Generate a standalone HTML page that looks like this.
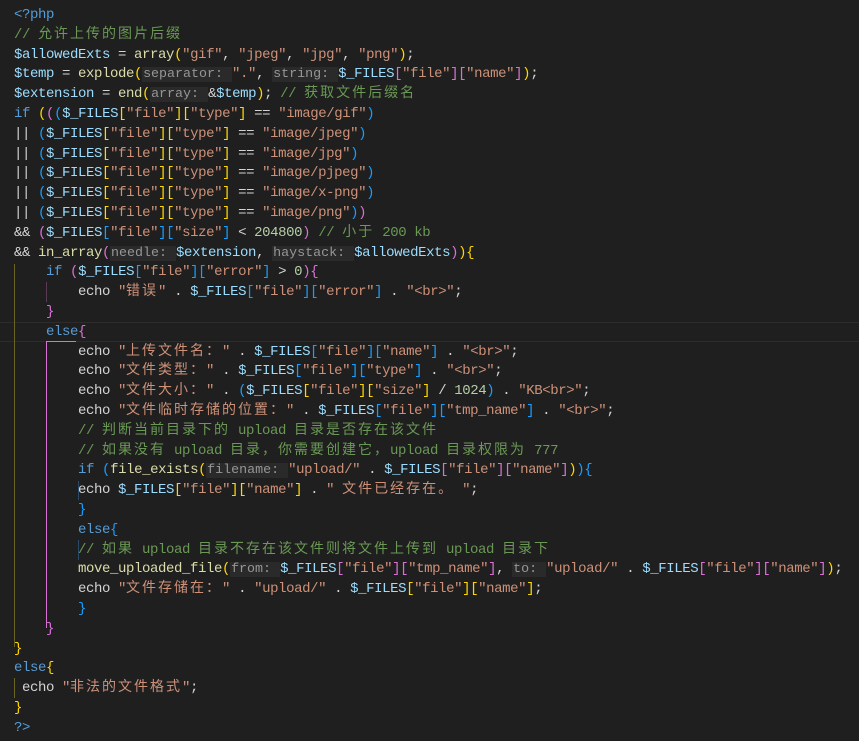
<!DOCTYPE html>
<html><head><meta charset="utf-8"><style>
body{margin:0;background:#1f1f1f;width:859px;height:741px;overflow:hidden;position:relative}
.l{position:absolute;left:14px;height:20px;line-height:20px;white-space:pre;font-family:"Liberation Mono","Noto Sans CJK SC",monospace;font-size:14px;letter-spacing:-0.4px;color:#d4d4d4}
.v{color:#9cdcfe}.k{color:#569cd6}.f{color:#dcdcaa}.s{color:#ce9178}.c{color:#6a9955}.n{color:#b5cea8}
.y{color:#ffd700}.p{color:#da70d6}.b{color:#179fff}
.h{color:#969696;background:#2a2a2a;padding:0 1px;line-height:1;font-size:13.33px;letter-spacing:0}
.z{font-family:"Noto Sans CJK SC",sans-serif;font-size:14px;letter-spacing:2px;line-height:1}
.g{position:absolute;width:1px}
</style></head><body>
<div style="position:absolute;left:0;top:322px;width:859px;height:18px;border-top:1px solid #2c2c2c;border-bottom:1px solid #2c2c2c"></div>
<div class="g" style="left:14px;top:264px;height:383px;background:#6b6420"></div>
<div class="g" style="left:14px;top:678px;height:20px;background:#6b6420"></div>
<div class="g" style="left:46px;top:282px;height:20px;background:#5a3a55"></div>
<div class="g" style="left:46px;top:341px;height:287px;background:#da70d6"></div>
<div style="position:absolute;left:46px;top:341px;width:30px;height:1px;background:#da70d6"></div>
<div class="g" style="left:78px;top:481px;height:19px;background:#2a4a6a"></div>
<div class="g" style="left:78px;top:540px;height:20px;background:#2a4a6a"></div>

<div class="l" style="top:5px"><span class="k">&lt;?php</span></div>
<div class="l" style="top:24.8px"><span class="c">// <span class="z">允许上传的图片后缀</span></span></div>
<div class="l" style="top:44.6px"><span class="v">$allowedExts</span> = <span class="f">array</span><span class="y">(</span><span class="s">"gif"</span>, <span class="s">"jpeg"</span>, <span class="s">"jpg"</span>, <span class="s">"png"</span><span class="y">)</span>;</div>
<div class="l" style="top:64.4px"><span class="v">$temp</span> = <span class="f">explode</span><span class="y">(</span><span class="h">separator: </span><span class="s">"."</span>, <span class="h">string: </span><span class="v">$_FILES</span><span class="p">[</span><span class="s">"file"</span><span class="p">][</span><span class="s">"name"</span><span class="p">]</span><span class="y">)</span>;</div>
<div class="l" style="top:84.2px"><span class="v">$extension</span> = <span class="f">end</span><span class="y">(</span><span class="h">array: </span>&amp;<span class="v">$temp</span><span class="y">)</span>; <span class="c">// <span class="z">获取文件后缀名</span></span></div>
<div class="l" style="top:104px"><span class="k">if</span> <span class="y">(</span><span class="p">(</span><span class="b">(</span><span class="v">$_FILES</span><span class="y">[</span><span class="s">"file"</span><span class="y">][</span><span class="s">"type"</span><span class="y">]</span> == <span class="s">"image/gif"</span><span class="b">)</span></div>
<div class="l" style="top:123.8px">|| <span class="b">(</span><span class="v">$_FILES</span><span class="y">[</span><span class="s">"file"</span><span class="y">][</span><span class="s">"type"</span><span class="y">]</span> == <span class="s">"image/jpeg"</span><span class="b">)</span></div>
<div class="l" style="top:143.6px">|| <span class="b">(</span><span class="v">$_FILES</span><span class="y">[</span><span class="s">"file"</span><span class="y">][</span><span class="s">"type"</span><span class="y">]</span> == <span class="s">"image/jpg"</span><span class="b">)</span></div>
<div class="l" style="top:163.4px">|| <span class="b">(</span><span class="v">$_FILES</span><span class="y">[</span><span class="s">"file"</span><span class="y">][</span><span class="s">"type"</span><span class="y">]</span> == <span class="s">"image/pjpeg"</span><span class="b">)</span></div>
<div class="l" style="top:183.2px">|| <span class="b">(</span><span class="v">$_FILES</span><span class="y">[</span><span class="s">"file"</span><span class="y">][</span><span class="s">"type"</span><span class="y">]</span> == <span class="s">"image/x-png"</span><span class="b">)</span></div>
<div class="l" style="top:203px">|| <span class="b">(</span><span class="v">$_FILES</span><span class="y">[</span><span class="s">"file"</span><span class="y">][</span><span class="s">"type"</span><span class="y">]</span> == <span class="s">"image/png"</span><span class="b">)</span><span class="p">)</span></div>
<div class="l" style="top:222.8px">&amp;&amp; <span class="p">(</span><span class="v">$_FILES</span><span class="b">[</span><span class="s">"file"</span><span class="b">][</span><span class="s">"size"</span><span class="b">]</span> &lt; <span class="n">204800</span><span class="p">)</span> <span class="c">// <span class="z">小于</span> 200 kb</span></div>
<div class="l" style="top:242.6px">&amp;&amp; <span class="f">in_array</span><span class="p">(</span><span class="h">needle: </span><span class="v">$extension</span>, <span class="h">haystack: </span><span class="v">$allowedExts</span><span class="p">)</span><span class="y">)</span><span class="y">{</span></div>
<div class="l" style="top:262.4px">    <span class="k">if</span> <span class="p">(</span><span class="v">$_FILES</span><span class="b">[</span><span class="s">"file"</span><span class="b">][</span><span class="s">"error"</span><span class="b">]</span> &gt; <span class="n">0</span><span class="p">){</span></div>
<div class="l" style="top:282.2px">        echo <span class="s">"<span class="z">错误</span>"</span> . <span class="v">$_FILES</span><span class="b">[</span><span class="s">"file"</span><span class="b">][</span><span class="s">"error"</span><span class="b">]</span> . <span class="s">"&lt;br&gt;"</span>;</div>
<div class="l" style="top:302px">    <span class="p">}</span></div>
<div class="l" style="top:321.8px">    <span class="k">else</span><span class="p">{</span></div>
<div class="l" style="top:341.6px">        echo <span class="s">"<span class="z">上传文件名：</span>"</span> . <span class="v">$_FILES</span><span class="b">[</span><span class="s">"file"</span><span class="b">][</span><span class="s">"name"</span><span class="b">]</span> . <span class="s">"&lt;br&gt;"</span>;</div>
<div class="l" style="top:361.4px">        echo <span class="s">"<span class="z">文件类型：</span>"</span> . <span class="v">$_FILES</span><span class="b">[</span><span class="s">"file"</span><span class="b">][</span><span class="s">"type"</span><span class="b">]</span> . <span class="s">"&lt;br&gt;"</span>;</div>
<div class="l" style="top:381.2px">        echo <span class="s">"<span class="z">文件大小：</span>"</span> . <span class="b">(</span><span class="v">$_FILES</span><span class="y">[</span><span class="s">"file"</span><span class="y">][</span><span class="s">"size"</span><span class="y">]</span> / <span class="n">1024</span><span class="b">)</span> . <span class="s">"KB&lt;br&gt;"</span>;</div>
<div class="l" style="top:401px">        echo <span class="s">"<span class="z">文件临时存储的位置：</span>"</span> . <span class="v">$_FILES</span><span class="b">[</span><span class="s">"file"</span><span class="b">][</span><span class="s">"tmp_name"</span><span class="b">]</span> . <span class="s">"&lt;br&gt;"</span>;</div>
<div class="l" style="top:420.8px">        <span class="c">// <span class="z">判断当前目录下的</span> upload <span class="z">目录是否存在该文件</span></span></div>
<div class="l" style="top:440.6px">        <span class="c">// <span class="z">如果没有</span> upload <span class="z">目录，你需要创建它，</span>upload <span class="z">目录权限为</span> 777</span></div>
<div class="l" style="top:460.4px">        <span class="k">if</span> <span class="b">(</span><span class="f">file_exists</span><span class="y">(</span><span class="h">filename: </span><span class="s">"upload/"</span> . <span class="v">$_FILES</span><span class="p">[</span><span class="s">"file"</span><span class="p">][</span><span class="s">"name"</span><span class="p">]</span><span class="y">)</span><span class="b">){</span></div>
<div class="l" style="top:480.2px">        echo <span class="v">$_FILES</span><span class="y">[</span><span class="s">"file"</span><span class="y">][</span><span class="s">"name"</span><span class="y">]</span> . <span class="s">" <span class="z">文件已经存在。</span> "</span>;</div>
<div class="l" style="top:500px">        <span class="b">}</span></div>
<div class="l" style="top:519.8px">        <span class="k">else</span><span class="b">{</span></div>
<div class="l" style="top:539.6px">        <span class="c">// <span class="z">如果</span> upload <span class="z">目录不存在该文件则将文件上传到</span> upload <span class="z">目录下</span></span></div>
<div class="l" style="top:559.4px">        <span class="f">move_uploaded_file</span><span class="y">(</span><span class="h">from: </span><span class="v">$_FILES</span><span class="p">[</span><span class="s">"file"</span><span class="p">][</span><span class="s">"tmp_name"</span><span class="p">]</span>, <span class="h">to: </span><span class="s">"upload/"</span> . <span class="v">$_FILES</span><span class="p">[</span><span class="s">"file"</span><span class="p">][</span><span class="s">"name"</span><span class="p">]</span><span class="y">)</span>;</div>
<div class="l" style="top:579.2px">        echo <span class="s">"<span class="z">文件存储在：</span>"</span> . <span class="s">"upload/"</span> . <span class="v">$_FILES</span><span class="y">[</span><span class="s">"file"</span><span class="y">][</span><span class="s">"name"</span><span class="y">]</span>;</div>
<div class="l" style="top:599px">        <span class="b">}</span></div>
<div class="l" style="top:618.8px">    <span class="p">}</span></div>
<div class="l" style="top:638.6px"><span class="y">}</span></div>
<div class="l" style="top:658.4px"><span class="k">else</span><span class="y">{</span></div>
<div class="l" style="top:678.2px"> echo <span class="s">"<span class="z">非法的文件格式</span>"</span>;</div>
<div class="l" style="top:698px"><span class="y">}</span></div>
<div class="l" style="top:717.8px"><span class="k">?&gt;</span></div>
</body></html>
